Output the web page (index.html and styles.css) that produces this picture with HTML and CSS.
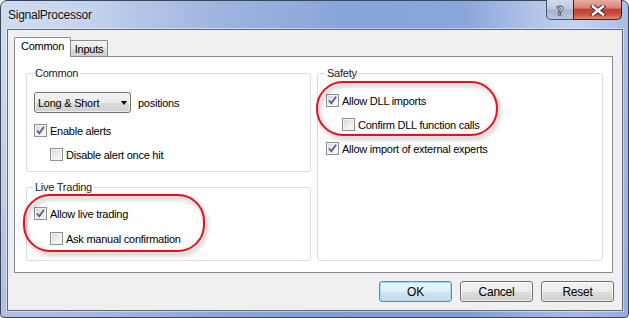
FILE: index.html
```html
<!DOCTYPE html>
<html lang="en">
<head>
    <meta charset="UTF-8">
    <meta name="viewport" content="width=device-width, initial-scale=1.0">
    <title>SignalProcessor</title>
    <link rel="stylesheet" href="styles.css">
</head>
<body>
    <div class="window">
        <div class="titlebar">
            <span class="title">SignalProcessor</span>
            <div class="caption-buttons">
                <span class="cap-btn help">?</span>
                <span class="cap-btn close">
                    <svg width="16" height="11" viewBox="0 0 16 11">
                        <path d="M3 1.5 L13 9.5 M13 1.5 L3 9.5" stroke="#3b2c2c" stroke-width="4.6" stroke-linecap="square"/>
                        <path d="M3 1.5 L13 9.5 M13 1.5 L3 9.5" stroke="#fff" stroke-width="2.6" stroke-linecap="square"/>
                    </svg>
                </span>
            </div>
        </div>

        <div class="client">
            <div class="tabs">
                <span class="tab active">Common</span>
                <span class="tab">Inputs</span>
            </div>

            <div class="panel">
                <fieldset class="group group-common">
                    <legend>Common</legend>
                    <div class="row">
                        <div class="combo">
                            <span>Long &amp; Short</span>
                            <span class="arrow"></span>
                        </div>
                        <span class="combo-label">positions</span>
                    </div>
                    <div class="check checked first-check">
                        <span class="cb"><svg width="11" height="11" viewBox="0 0 11 11"><path d="M2 5.5 L4.3 8.3 L9 1.8" fill="none" stroke="#4b61a0" stroke-width="1.8"/></svg></span>
                        <span>Enable alerts</span>
                    </div>
                    <div class="check sub">
                        <span class="cb"></span>
                        <span>Disable alert once hit</span>
                    </div>
                </fieldset>

                <fieldset class="group group-live">
                    <legend>Live Trading</legend>
                    <div class="check checked">
                        <span class="cb"><svg width="11" height="11" viewBox="0 0 11 11"><path d="M2 5.5 L4.3 8.3 L9 1.8" fill="none" stroke="#4b61a0" stroke-width="1.8"/></svg></span>
                        <span>Allow live trading</span>
                    </div>
                    <div class="check sub live-sub">
                        <span class="cb"></span>
                        <span>Ask manual confirmation</span>
                    </div>
                    <div class="mark mark-live"></div>
                </fieldset>

                <fieldset class="group group-safety">
                    <legend>Safety</legend>
                    <div class="check checked">
                        <span class="cb"><svg width="11" height="11" viewBox="0 0 11 11"><path d="M2 5.5 L4.3 8.3 L9 1.8" fill="none" stroke="#4b61a0" stroke-width="1.8"/></svg></span>
                        <span>Allow DLL imports</span>
                    </div>
                    <div class="check sub">
                        <span class="cb"></span>
                        <span>Confirm DLL function calls</span>
                    </div>
                    <div class="check checked">
                        <span class="cb"><svg width="11" height="11" viewBox="0 0 11 11"><path d="M2 5.5 L4.3 8.3 L9 1.8" fill="none" stroke="#4b61a0" stroke-width="1.8"/></svg></span>
                        <span>Allow import of external experts</span>
                    </div>
                    <div class="mark mark-safety"></div>
                </fieldset>
            </div>

            <div class="buttons">
                <span class="btn default">OK</span>
                <span class="btn">Cancel</span>
                <span class="btn">Reset</span>
            </div>
        </div>
    </div>
</body>
</html>
```

FILE: styles.css
```css
body {
    margin: 0;
    background: #fff;
    font-family: "Liberation Sans", Arial, sans-serif;
    font-size: 11px;
    letter-spacing: -0.25px;
    color: #000;
}
.window {
    box-sizing: border-box;
    width: 629px;
    height: 318px;
    display: flex;
    flex-direction: column;
    padding: 0 5px 6px 6px;
    border: 1px solid #3b4656;
    border-radius: 7px 7px 4px 4px;
    background:
        linear-gradient(180deg, rgba(255, 255, 255, 0) 40px, rgba(110, 140, 205, 0.35) 100%),
        linear-gradient(90deg, #cfdbef 0, #c3d2ed 14%, #9db4df 35%, #89a5d9 55%, #8ba6da 74%, #b4c7ea 86%, #c5d4ee 92%, #a6bce5 100%);
}
.titlebar {
    height: 28px;
    display: flex;
    align-items: center;
    flex-shrink: 0;
}
.title {
    padding-left: 1px;
    font-size: 12px;
    color: #111;
    text-shadow: 0 0 6px rgba(255, 255, 255, 0.8);
    margin-top: -1px;
}
.caption-buttons {
    margin-left: auto;
    margin-right: 1px;
    align-self: flex-start;
    margin-top: -1px;
    display: flex;
}
.cap-btn {
    box-sizing: border-box;
    height: 20px;
    display: flex;
    align-items: center;
    justify-content: center;
}
.help {
    width: 28px;
    border: 1px solid #4a556b;
    border-top: none;
    border-radius: 0 0 0 5px;
    background: linear-gradient(180deg, #d3dcec 0, #bcc9df 48%, #a3b3cf 52%, #b9c8e0 100%);
    color: #fff;
    font-family: "DejaVu Sans", sans-serif;
    font-weight: bold;
    font-size: 13px;
    -webkit-text-stroke: 0.8px #3d4656;
    padding-top: 1px;
}
.close {
    width: 49px;
    margin-left: -1px;
    border: 1px solid #4d1c16;
    border-top: none;
    border-radius: 0 0 5px 0;
    background: linear-gradient(180deg, #e8aea3 0, #d98275 42%, #c2402f 50%, #c9513f 75%, #dc8a72 100%);
    padding-top: 1px;
}
.client {
    flex: 1;
    box-sizing: border-box;
    border: 1px solid #5e6a7c;
    background: #f0f0f0;
    padding: 7px 8px 8px 6px;
    box-shadow: 0 0 0 1px rgba(255, 255, 255, 0.45);
}
.tabs {
    display: flex;
    align-items: flex-end;
}
.tab {
    box-sizing: border-box;
    border: 1px solid #898c95;
    border-bottom: none;
    text-align: center;
    line-height: 13px;
}
.tab.active {
    position: relative;
    z-index: 1;
    width: 57px;
    height: 20px;
    padding-top: 2px;
    margin-bottom: -1px;
    background: #fff;
    border-radius: 2px 2px 0 0;
}
.tab:not(.active) {
    width: 38px;
    height: 16px;
    padding-top: 2px;
    margin-left: -1px;
    background: linear-gradient(180deg, #f3f3f3 0, #ebebeb 50%, #dddddd 51%, #cfcfcf 100%);
    border-radius: 0 2px 0 0;
}
.panel {
    box-sizing: border-box;
    width: 599px;
    height: 217px;
    border: 1px solid #898c95;
    background: #fff;
    display: grid;
    grid-template-columns: 285px 286px;
    grid-template-rows: auto 1fr;
    column-gap: 6px;
    row-gap: 9px;
    padding: 10px 0 11px 11px;
}
.group {
    position: relative;
    margin: 0;
    min-width: 0;
    border: 1px solid #d5dfe5;
    border-radius: 3px;
}
.group legend {
    padding: 0 2px;
    margin-left: -1px;
    line-height: 13px;
    color: #1a1a1a;
}
.group-common {
    grid-column: 1;
    grid-row: 1;
    padding: 12px 7px 10px 7px;
}
.group-live {
    grid-column: 1;
    grid-row: 2;
    padding: 13px 7px 0 7px;
}
.group-safety {
    grid-column: 2;
    grid-row: 1 / 3;
    padding: 14px 8px 0 8px;
}
.row {
    display: flex;
    align-items: center;
}
.combo {
    box-sizing: border-box;
    width: 97px;
    height: 21px;
    border: 1px solid #707070;
    border-radius: 3px;
    background: linear-gradient(180deg, #f2f2f2 0, #ebebeb 50%, #dddddd 51%, #cfcfcf 100%);
    display: flex;
    align-items: center;
    padding-left: 3px;
    box-shadow: inset 0 0 0 1px rgba(255, 255, 255, 0.6);
}
.arrow {
    margin-left: auto;
    margin-right: 3px;
    width: 0;
    height: 0;
    border-left: 3.5px solid transparent;
    border-right: 3.5px solid transparent;
    border-top: 4px solid #000;
}
.combo-label {
    margin-left: 7px;
}
.check {
    display: flex;
    align-items: center;
    height: 13px;
    margin-top: 11px;
}
.group-live .check:first-of-type,
.group-safety .check:first-of-type {
    margin-top: 0;
}
.first-check {
    margin-top: 11px;
}
.live-sub {
    margin-top: 12px;
}
.check.sub {
    margin-left: 16px;
}
.cb {
    box-sizing: border-box;
    width: 13px;
    height: 13px;
    margin-right: 3px;
    border: 1px solid #8e8f8f;
    background: linear-gradient(135deg, #d6d6d6 0, #f0f0f0 60%, #fbfbfb 100%);
    box-shadow: inset 0 0 0 1px #f5f5f5;
    display: flex;
    align-items: center;
    justify-content: center;
}
.mark {
    position: absolute;
    box-sizing: border-box;
    border: 2px solid #e3121d;
    border-radius: 27px;
    filter: drop-shadow(2px 3px 2px rgba(0, 0, 0, 0.35));
    pointer-events: none;
}
.mark-live {
    left: -4px;
    top: 0;
    width: 182px;
    height: 58px;
}
.mark-safety {
    left: -2px;
    top: 1px;
    width: 182px;
    height: 55px;
}
.buttons {
    display: flex;
    justify-content: flex-end;
    gap: 8px;
    margin-top: 8px;
}
.btn {
    box-sizing: border-box;
    width: 73px;
    height: 21px;
    border: 1px solid #707070;
    border-radius: 3px;
    background: linear-gradient(180deg, #f2f2f2 0, #ebebeb 50%, #dddddd 51%, #cfcfcf 100%);
    box-shadow: inset 0 0 0 1px rgba(255, 255, 255, 0.7);
    display: flex;
    align-items: center;
    justify-content: center;
    font-size: 12px;
}
.btn.default {
    border-color: #3c9ad6;
    box-shadow: inset 0 0 0 1px #9fd9f7;
    background: linear-gradient(180deg, #eaf6fd 0, #e0eef7 50%, #d1e5f2 51%, #c4dcec 100%);
}
```
